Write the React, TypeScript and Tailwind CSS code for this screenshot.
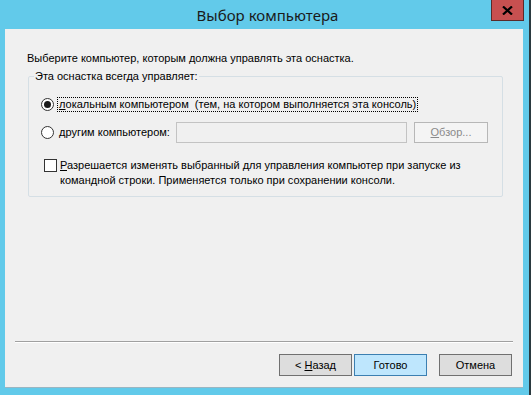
import React from "react";

const font = { fontFamily: '"Liberation Sans", Arial, sans-serif' };

function Radio({ checked }: { checked?: boolean }) {
  return (
    <span className="w-[13px] h-[13px] rounded-full border border-[#333333] bg-white flex items-center justify-center shrink-0">
      {checked && <span className="w-[7px] h-[7px] rounded-full bg-[#1a1a1a]" />}
    </span>
  );
}

export default function App() {
  return (
    <div
      className="w-[531px] h-[395px] bg-[#62caea] flex flex-col border-r-2 border-[#2b3a40] text-[11px] text-black overflow-hidden"
      style={font}
    >
      {/* Title bar */}
      <div className="h-[29px] relative flex items-center justify-center shrink-0">
        <span className="text-[15px] text-[#1a1a1a] pl-[6px] pt-[1px]" style={{ fontFamily: '"Noto Sans", "Open Sans", sans-serif' }}>
          Выбор компьютера
        </span>
        <div className="absolute right-[5px] top-0 w-[33px] h-[21px] bg-[#c75050] border border-t-0 border-[#5a2a2a] flex items-center justify-center">
          <svg width="11" height="9" viewBox="0 0 11 9">
            <path d="M1 0.5 L10 8.5 M10 0.5 L1 8.5" stroke="#000" strokeWidth="2.2" />
          </svg>
        </div>
      </div>

      {/* Body */}
      <div className="ml-[5px] mr-[6px] h-[359px] bg-[#f0f0f0] flex flex-col border-b border-[#9ab6c2]">
        <div className="pl-[22px] pt-[23px] leading-[13px]">
          Выберите компьютер, которым должна управлять эта оснастка.
        </div>

        <fieldset className="ml-[23px] w-[475px] h-[127px] mt-[5px] border border-[#d5dfe5] rounded-[2px] px-[12px] pb-0 pt-0">
          <legend className="px-[1px] ml-[-7px] leading-[13px]">Эта оснастка всегда управляет:</legend>

          <div className="flex items-center mt-[13px] h-[16px]">
            <Radio checked />
            <span className="ml-[3px] border border-dotted border-black px-[1px] leading-[13px]">
              <span className="underline underline-offset-1">л</span>окальным компьютером&nbsp; (тем, на котором выполняется эта консоль)
            </span>
          </div>

          <div className="flex items-center mt-[10px] h-[20px]">
            <Radio />
            <span className="ml-[5px] leading-[13px] w-[117px]">
              <span className="underline underline-offset-1">д</span>ругим компьютером:
            </span>
            <div className="w-[231px] h-[21px] border border-[#c3c3c3] bg-[#f0f0f0]" />
            <div className="ml-[7px] w-[74px] h-[21px] border border-[#b7b7b7] bg-[#f4f4f4] flex items-center justify-center text-[#8a8a8a]">
              <span>
                <span className="underline underline-offset-1">О</span>бзор...
              </span>
            </div>
          </div>

          <div className="flex items-start mt-[16px] ml-[3px]">
            <span className="w-[13px] h-[13px] border border-[#333333] bg-white shrink-0 mt-[1px]" />
            <p className="ml-[3px] leading-[15px] w-[420px] first-letter:underline first-letter:underline-offset-1">
              Разрешается изменять выбранный для управления компьютер при запуске из командной строки. Применяется только при сохранении консоли.
            </p>
          </div>
        </fieldset>

        <div className="flex-1" />

        <div className="mx-[10px] h-[2px] border-t border-[#a0a0a0] border-b border-b-white" />

        <div className="flex justify-end pr-[11px] pt-[11px] pb-[11px]">
          <button className="w-[73px] h-[22px] border border-[#707070] bg-[#dddddd] flex items-center justify-center">
            <span>
              &lt; <span className="underline underline-offset-1">Н</span>азад
            </span>
          </button>
          <button className="ml-[2px] w-[73px] h-[22px] border border-[#3c7fb1] bg-[#bee6fd] flex items-center justify-center">
            Готово
          </button>
          <button className="ml-[12px] w-[73px] h-[22px] border border-[#707070] bg-[#dddddd] flex items-center justify-center">
            Отмена
          </button>
        </div>
      </div>
    </div>
  );
}
